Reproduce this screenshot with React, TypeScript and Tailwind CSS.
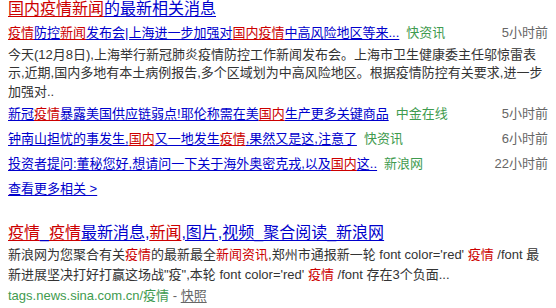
import React from "react";

type Seg = [string, boolean?];

const FONT = { fontFamily: '"Liberation Sans", Arial, "Noto Sans CJK SC", sans-serif' };

function LinkText({ segs, className = "" }: { segs: Seg[]; className?: string }) {
  return (
    <a href="#" className={`whitespace-nowrap ${className}`}>
      {segs.map(([t, em], i) => (
        <span
          key={i}
          className={em ? "text-[#cc0000] underline underline-offset-2" : "text-[#0000cc] underline underline-offset-2"}
        >
          {t}
        </span>
      ))}
    </a>
  );
}

interface NewsRow {
  segs: Seg[];
  source: string;
  time: string;
}

const rows: NewsRow[] = [
  {
    segs: [["疫情", true], ["防控"], ["新闻", true], ["发布会|上海进一步加强对"], ["国内疫情", true], ["中高风险地区等来..."]],
    source: "快资讯",
    time: "5小时前",
  },
  {
    segs: [["新冠"], ["疫情", true], ["暴露美国供应链弱点!耶伦称需在美"], ["国内", true], ["生产更多关键商品"]],
    source: "中金在线",
    time: "5小时前",
  },
  {
    segs: [["钟南山担忧的事发生,"], ["国内", true], ["又一地发生"], ["疫情", true], [",果然又是这,注意了"]],
    source: "快资讯",
    time: "6小时前",
  },
  {
    segs: [["投资者提问:董秘您好,想请问一下关于海外奥密克戎,以及"], ["国内", true], ["这.."]],
    source: "新浪网",
    time: "22小时前",
  },
];

function Row({ row }: { row: NewsRow }) {
  return (
    <div className="flex h-[25px] items-center justify-between text-[13px]">
      <div className="flex items-center">
        <LinkText segs={row.segs} />
        <span className="ml-[7px] text-[#3f9b4f]">{row.source}</span>
      </div>
      <span className="text-[#666]">{row.time}</span>
    </div>
  );
}

export default function App() {
  return (
    <div className="h-[308px] w-[556px] overflow-hidden bg-white pl-2 text-[#333]" style={FONT}>
      <div className="w-[540px]">
        {/* result 1 */}
        <div className="text-[16px] leading-[18px]">
          <LinkText segs={[["国内疫情新闻", true], ["的最新相关消息"]]} />
        </div>
        <div className="mt-[2.5px]">
          <Row row={rows[0]} />
        </div>
        <p className="text-[13px] leading-[18.5px]">
          今天(12月8日),上海举行新冠肺炎疫情防控工作新闻发布会。上海市卫生健康委主任邬惊雷表示,近期,国内多地有本土病例报告,多个区域划为中高风险地区。根据疫情防控有关要求,进一步加强对..
        </p>
        {rows.slice(1).map((r, i) => (
          <Row key={i} row={r} />
        ))}
        <div className="flex h-[25px] items-center text-[13px]">
          <a href="#" className="text-[#0000cc] underline underline-offset-2">
            查看更多相关 &gt;
          </a>
        </div>

        {/* result 2 */}
        <div className="mt-[21.5px] text-[16px] leading-[20px]">
          <LinkText
            segs={[
              ["疫情", true],
              ["_"],
              ["疫情", true],
              ["最新消息,"],
              ["新闻", true],
              [",图片,视频_聚合阅读_新浪网"],
            ]}
          />
        </div>
        <p className="mt-[2.5px] text-[13px] leading-[20px]">
          新浪网为您聚合有关<span className="text-[#cc0000]">疫情</span>的最新最全
          <span className="text-[#cc0000]">新闻资讯</span>,郑州市通报新一轮 font color='red'{" "}
          <span className="text-[#cc0000]">疫情</span> /font 最新进展坚决打好打赢这场战"疫",本轮 font
          color='red' <span className="text-[#cc0000]">疫情</span> /font 存在3个负面...
        </p>
        <div className="mt-px text-[13px] leading-[20px]">
          <span className="text-[#3f9b4f]">tags.news.sina.com.cn/疫情</span>
          <span className="text-[#666]"> - </span>
          <a href="#" className="text-[#666] underline underline-offset-2">
            快照
          </a>
        </div>
      </div>
    </div>
  );
}
